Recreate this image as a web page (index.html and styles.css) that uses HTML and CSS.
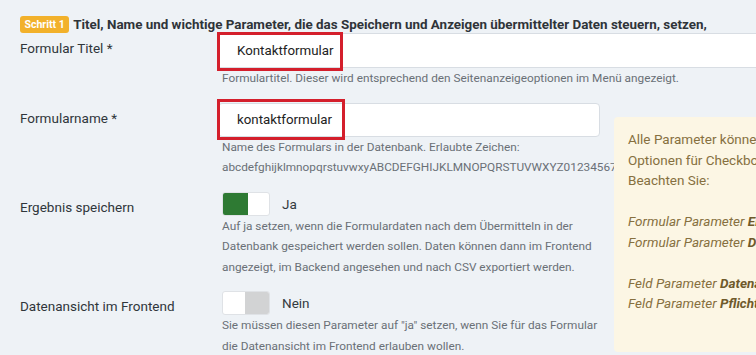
FILE: index.html
```html
<!DOCTYPE html>
<html lang="de">
<head>
<meta charset="utf-8">
<title>Formular</title>
<link rel="stylesheet" href="styles.css">
</head>
<body>
<div class="page">
  <div class="step">
    <span class="badge">Schritt 1</span>
    <span class="step-title">Titel, Name und wichtige Parameter, die das Speichern und Anzeigen übermittelter Daten steuern, setzen,</span>
  </div>

  <div class="row row-first">
    <div class="label">Formular Titel *</div>
    <div class="field">
      <div class="input input-full">
        <span class="value">Kontaktformular</span>
        <span class="mark mark-1"></span>
      </div>
      <div class="help">Formulartitel. Dieser wird entsprechend den Seitenanzeigeoptionen im Menü angezeigt.</div>
    </div>
  </div>

  <div class="row">
    <div class="label">Formularname *</div>
    <div class="field">
      <div class="input input-short">
        <span class="value">kontaktformular</span>
        <span class="mark mark-2"></span>
      </div>
      <div class="help">Name des Formulars in der Datenbank. Erlaubte Zeichen:<br>abcdefghijklmnopqrstuvwxyABCDEFGHIJKLMNOPQRSTUVWXYZ0123456789</div>
    </div>
  </div>

  <div class="row">
    <div class="label">Ergebnis speichern</div>
    <div class="field">
      <div class="switch-line">
        <span class="switch switch-on"><span class="knob"></span></span>
        <span class="switch-text">Ja</span>
      </div>
      <div class="help">Auf ja setzen, wenn die Formulardaten nach dem Übermitteln in der<br>Datenbank gespeichert werden sollen. Daten können dann im Frontend<br>angezeigt, im Backend angesehen und nach CSV exportiert werden.</div>
    </div>
  </div>

  <div class="row">
    <div class="label">Datenansicht im Frontend</div>
    <div class="field">
      <div class="switch-line">
        <span class="switch switch-off"><span class="knob"></span></span>
        <span class="switch-text">Nein</span>
      </div>
      <div class="help">Sie müssen diesen Parameter auf "ja" setzen, wenn Sie für das Formular<br>die Datenansicht im Frontend erlauben wollen.</div>
    </div>
  </div>

  <aside class="note">
    <p>Alle Parameter können auch nachträglich geändert werden.</p>
    <p>Optionen für Checkboxen und Auswahllisten.</p>
    <p>Beachten Sie:</p>
    <p class="gap"><i>Formular Parameter <b>Ergebnis speichern</b></i></p>
    <p><i>Formular Parameter <b>Datenansicht im Frontend</b></i></p>
    <p class="gap"><i>Feld Parameter <b>Datenansicht</b></i></p>
    <p><i>Feld Parameter <b>Pflichtfeld</b></i></p>
  </aside>
</div>
</body>
</html>
```

FILE: styles.css
```css
html, body {
  margin: 0;
  padding: 0;
}
body {
  background: #eef2f6;
  font-family: Roboto, "Noto Sans", sans-serif;
  color: #333a40;
  overflow: hidden;
  width: 756px;
  height: 355px;
}
.page {
  position: relative;
  padding: 16px 0 0 20px;
}
.step {
  display: flex;
  align-items: center;
  gap: 4px;
  height: 17px;
  white-space: nowrap;
}
.badge {
  background: #f2b12b;
  color: #fff;
  font-size: 10.5px;
  font-weight: 700;
  line-height: 17px;
  padding: 0 4.5px;
  border-radius: 3px;
}
.step-title {
  font-size: 13.4px;
  font-weight: 700;
  color: #2f3439;
}
.row {
  display: grid;
  grid-template-columns: 198px 1fr;
  margin-top: 14px;
}
.row-first {
  margin-top: 0;
}
.label {
  font-size: 13.5px;
  line-height: 20px;
  padding-top: 5px;
  color: #30363b;
}
.field {
  min-width: 0;
}
.input {
  position: relative;
  background: #fff;
  border: 1px solid #d8dde3;
  box-sizing: border-box;
  height: 35px;
  display: flex;
  align-items: center;
  padding-left: 18px;
  font-size: 13.3px;
  color: #222;
}
.input-full {
  margin-right: -40px;
  border-right: none;
}
.input-short {
  width: 382px;
  height: 34px;
  border-radius: 4px;
}
.mark {
  position: absolute;
  border: 3px solid #d41f2c;
  box-sizing: border-box;
  left: -2px;
}
.mark-1 {
  top: -2px;
  width: 126px;
  height: 39px;
}
.mark-2 {
  top: -5px;
  width: 128px;
  height: 41px;
}
.help {
  font-size: 11.8px;
  line-height: 20.5px;
  color: #6a7076;
  padding-left: 4px;
  white-space: nowrap;
}
.switch-line {
  display: flex;
  align-items: center;
  gap: 12px;
  padding-left: 4px;
  height: 24px;
}
.switch {
  display: flex;
  width: 48px;
  height: 24px;
  box-sizing: border-box;
  border: 1px solid #dfe2e6;
  border-radius: 3px;
  background: #fff;
  overflow: hidden;
}
.switch-on::before {
  content: "";
  width: 25px;
  background: #2e7a33;
}
.switch-off .knob {
  margin-left: auto;
  width: 24px;
  background: #d2d3d4;
}
.switch-text {
  font-size: 13.5px;
  color: #333a40;
}
.note {
  position: absolute;
  left: 614px;
  top: 117px;
  width: 320px;
  height: 235px;
  box-sizing: border-box;
  background: #fcf6e4;
  border-radius: 4px;
  padding: 12px 14px;
  color: #86703f;
  font-size: 13.5px;
  line-height: 20.5px;
  white-space: nowrap;
}
.note p {
  margin: 0;
}
.note .gap {
  margin-top: 20.5px;
}
.note b {
  font-weight: 700;
  color: #6f5a2c;
}
```
